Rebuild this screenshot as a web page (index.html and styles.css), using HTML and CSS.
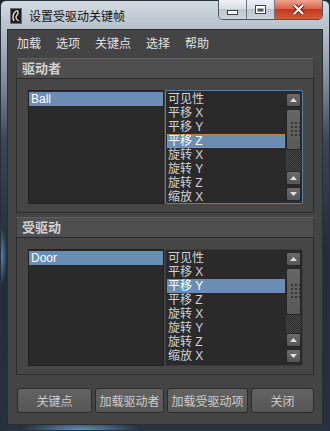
FILE: index.html
```html
<!DOCTYPE html>
<html lang="zh">
<head>
  <meta charset="UTF-8">
  <title>设置受驱动关键帧</title>
  <link rel="stylesheet" href="styles.css">
</head>
<body>
  <div class="window">
    <div class="titlebar">
      <svg class="app-icon" width="12" height="16" viewBox="0 0 12 16">
        <rect x="0.5" y="0.5" width="11" height="15" fill="#1b1b1b" stroke="#6a6a6a"/>
        <path d="M4 13 C2 10 3 5 6 3 C8 2 9 5 7 7 C5 9 6 12 9 13" fill="none" stroke="#e8e8e8" stroke-width="1.3"/>
      </svg>
      <span class="title">设置受驱动关键帧</span>
      <div class="caption">
        <div class="cap min">
          <svg width="11" height="5" viewBox="0 0 11 5"><rect x="0.5" y="0.5" width="10" height="4" fill="#fff" stroke="#3b4450"/></svg>
        </div>
        <div class="cap max">
          <svg width="11" height="9" viewBox="0 0 11 9"><rect x="0.5" y="0.5" width="10" height="8" fill="#fff" stroke="#3b4450"/><rect x="2.5" y="3.5" width="6" height="3" fill="#4a5563"/></svg>
        </div>
        <div class="cap close">
          <svg width="13" height="11" viewBox="0 0 13 11"><path d="M2 1 L11 10 M11 1 L2 10" stroke="#5a1a10" stroke-width="4"/><path d="M2 1 L11 10 M11 1 L2 10" stroke="#fff" stroke-width="2.2"/></svg>
        </div>
      </div>
    </div>

    <div class="client">
      <div class="menubar">
        <span>加载</span>
        <span>选项</span>
        <span>关键点</span>
        <span>选择</span>
        <span>帮助</span>
      </div>

      <div class="frame">
        <div class="frame-head">驱动者</div>
        <div class="frame-body drivers">
          <div class="list objects">
            <div class="row sel">Ball</div>
          </div>
          <div class="list attrs focus">
            <div class="rows">
              <div class="row">可见性</div>
              <div class="row">平移 X</div>
              <div class="row">平移 Y</div>
              <div class="row sel current">平移 Z</div>
              <div class="row">旋转 X</div>
              <div class="row">旋转 Y</div>
              <div class="row">旋转 Z</div>
              <div class="row">缩放 X</div>
            </div>
            <div class="scrollbar">
              <div class="sb-btn"><svg width="7" height="4" viewBox="0 0 7 4"><polygon points="3.5,0 7,4 0,4" fill="#e0e0e0"/></svg></div>
              <div class="thumb short"><div class="grip"></div></div>
              <div class="track"></div>
              <div class="sb-btn"><svg width="7" height="4" viewBox="0 0 7 4"><polygon points="3.5,0 7,4 0,4" fill="#e0e0e0"/></svg></div>
              <div class="sb-btn"><svg width="7" height="4" viewBox="0 0 7 4"><polygon points="0,0 7,0 3.5,4" fill="#e0e0e0"/></svg></div>
            </div>
          </div>
        </div>
      </div>

      <div class="frame">
        <div class="frame-head">受驱动</div>
        <div class="frame-body driven">
          <div class="list objects">
            <div class="row sel">Door</div>
          </div>
          <div class="list attrs">
            <div class="rows">
              <div class="row">可见性</div>
              <div class="row">平移 X</div>
              <div class="row sel">平移 Y</div>
              <div class="row">平移 Z</div>
              <div class="row">旋转 X</div>
              <div class="row">旋转 Y</div>
              <div class="row">旋转 Z</div>
              <div class="row">缩放 X</div>
            </div>
            <div class="scrollbar">
              <div class="sb-btn"><svg width="7" height="4" viewBox="0 0 7 4"><polygon points="3.5,0 7,4 0,4" fill="#e0e0e0"/></svg></div>
              <div class="thumb tall"><div class="grip"></div></div>
              <div class="track"></div>
              <div class="sb-btn"><svg width="7" height="4" viewBox="0 0 7 4"><polygon points="3.5,0 7,4 0,4" fill="#e0e0e0"/></svg></div>
              <div class="sb-btn"><svg width="7" height="4" viewBox="0 0 7 4"><polygon points="0,0 7,0 3.5,4" fill="#e0e0e0"/></svg></div>
            </div>
          </div>
        </div>
      </div>

      <div class="actions">
        <button>关键点</button>
        <button>加载驱动者</button>
        <button>加载受驱动项</button>
        <button>关闭</button>
      </div>
    </div>
  </div>
</body>
</html>
```

FILE: styles.css
```css
* {
  box-sizing: border-box;
}

body {
  margin: 0;
  background: #1c2430;
  font-family: "Liberation Sans", "Noto Sans CJK SC", sans-serif;
  font-size: 12px;
}

.window {
  width: 330px;
  height: 431px;
  padding: 0 6px 6px;
  border: 1px solid #27313c;
  border-radius: 6px 6px 0 0;
  background:
    radial-gradient(ellipse 60px 10px at 80px 100%, rgba(110, 170, 225, 0.8), transparent),
    radial-gradient(ellipse 6px 30px at 0 255px, rgba(100, 160, 220, 0.8), transparent),
    linear-gradient(180deg, #d4dbe3 0, #c0c9d3 18px, #aab5c1 40px, #7f8d9c 80px, #3a4654 140px, #222c38 260px, #27323f 100%);
}

/* title bar */
.titlebar {
  height: 28px;
  display: flex;
  align-items: center;
  padding-left: 3px;
}

.app-icon {
  flex: none;
  margin-top: 2px;
}

.title {
  margin-left: 7px;
  color: #111;
  font-size: 12px;
}

.caption {
  margin-left: auto;
  align-self: flex-start;
  margin-top: -1px;
  display: flex;
  height: 20px;
  border: 1px solid #4b5562;
  border-top: none;
  border-radius: 0 0 5px 5px;
  overflow: hidden;
}

.cap {
  height: 19px;
  display: flex;
  align-items: center;
  justify-content: center;
  background: linear-gradient(180deg, #eef1f4 0, #d9dfe5 45%, #bcc5cf 50%, #cdd5de 100%);
  border-right: 1px solid #6e7884;
}

.cap.min {
  width: 28px;
  padding-top: 6px;
}

.cap.max {
  width: 28px;
}

.cap.close {
  width: 47px;
  border-right: none;
  background: linear-gradient(180deg, #eea58f 0, #d9644a 45%, #c2391f 50%, #d65a3a 100%);
}

/* client area */
.client {
  height: 396px;
  background: #444;
  border: 1px solid #2a2e33;
}

.menubar {
  height: 24px;
  display: flex;
  align-items: center;
  gap: 15px;
  padding-left: 9px;
  color: #e2e2e2;
}

.frame {
  margin: 4px 8px 0;
}

.frame-head {
  height: 20px;
  padding-left: 5px;
  background: #4f4f4f;
  border: 1px solid #393939;
  border-top-color: #5e5e5e;
  border-bottom: none;
  color: #d2d2d2;
  font-weight: bold;
  font-size: 13px;
  line-height: 19px;
}

.frame-body {
  display: flex;
  gap: 1px;
  padding: 11px 10px 8px 11px;
  background: #464646;
  border: 1px solid #2c2c2c;
}

.frame-body.drivers {
  height: 135px;
}

.frame-body.driven {
  height: 138px;
}

.list {
  background: #2a2a2a;
  border: 1px solid #202020;
  padding: 1px 0;
  overflow: hidden;
}

.list.objects {
  width: 136px;
}

.list.attrs {
  flex: 1;
  display: flex;
  padding: 1px;
  border-color: #3c3c3c;
  border-radius: 2px;
}

.list.attrs.focus {
  border-color: #5b7fa3;
}

.rows {
  flex: 1;
  overflow: hidden;
}

.row {
  height: 14px;
  line-height: 14px;
  padding-left: 2px;
  color: #d2d2d2;
  white-space: pre;
}

.rows .row {
  padding-left: 1px;
}

.row.sel {
  background: #6a8db3;
  color: #fff;
}

.row.current {
  outline: 1px dotted #d38b3c;
  outline-offset: -1px;
}

/* scrollbar */
.scrollbar {
  width: 16px;
  display: flex;
  flex-direction: column;
  gap: 2px;
  padding: 1px 0 1px 1px;
}

.sb-btn {
  height: 14px;
  display: flex;
  align-items: center;
  justify-content: center;
  background: linear-gradient(180deg, #6c6c6c, #565656);
  border: 1px solid #262626;
  border-radius: 2px;
}

.thumb {
  display: flex;
  align-items: center;
  justify-content: center;
  background: linear-gradient(180deg, #666, #5a5a5a);
  border: 1px solid #262626;
  border-radius: 2px;
}

.thumb.short {
  height: 41px;
}

.thumb.tall {
  height: 47px;
}

.grip {
  width: 12px;
  height: 16px;
  margin-left: 2px;
  background: conic-gradient(#353535 25%, transparent 0) 0 0 / 4px 4px;
}

.track {
  flex: 1;
  margin: -2px 0;
  background: repeating-conic-gradient(#2c2c2c 0 25%, #474747 0 50%) 0 0 / 2px 2px;
}

/* bottom buttons */
.actions {
  display: grid;
  grid-template-columns: 75px 69px 81px 63px;
  column-gap: 3px;
  margin: 13px 0 0 9px;
}

.actions button {
  height: 25px;
  padding: 0;
  font-family: "Liberation Sans", "Noto Sans CJK SC", sans-serif;
  font-size: 12px;
  color: #cdcdcd;
  background: linear-gradient(180deg, #626262, #575757);
  border: 1px solid #2a2a2a;
  border-radius: 3px;
}
```
